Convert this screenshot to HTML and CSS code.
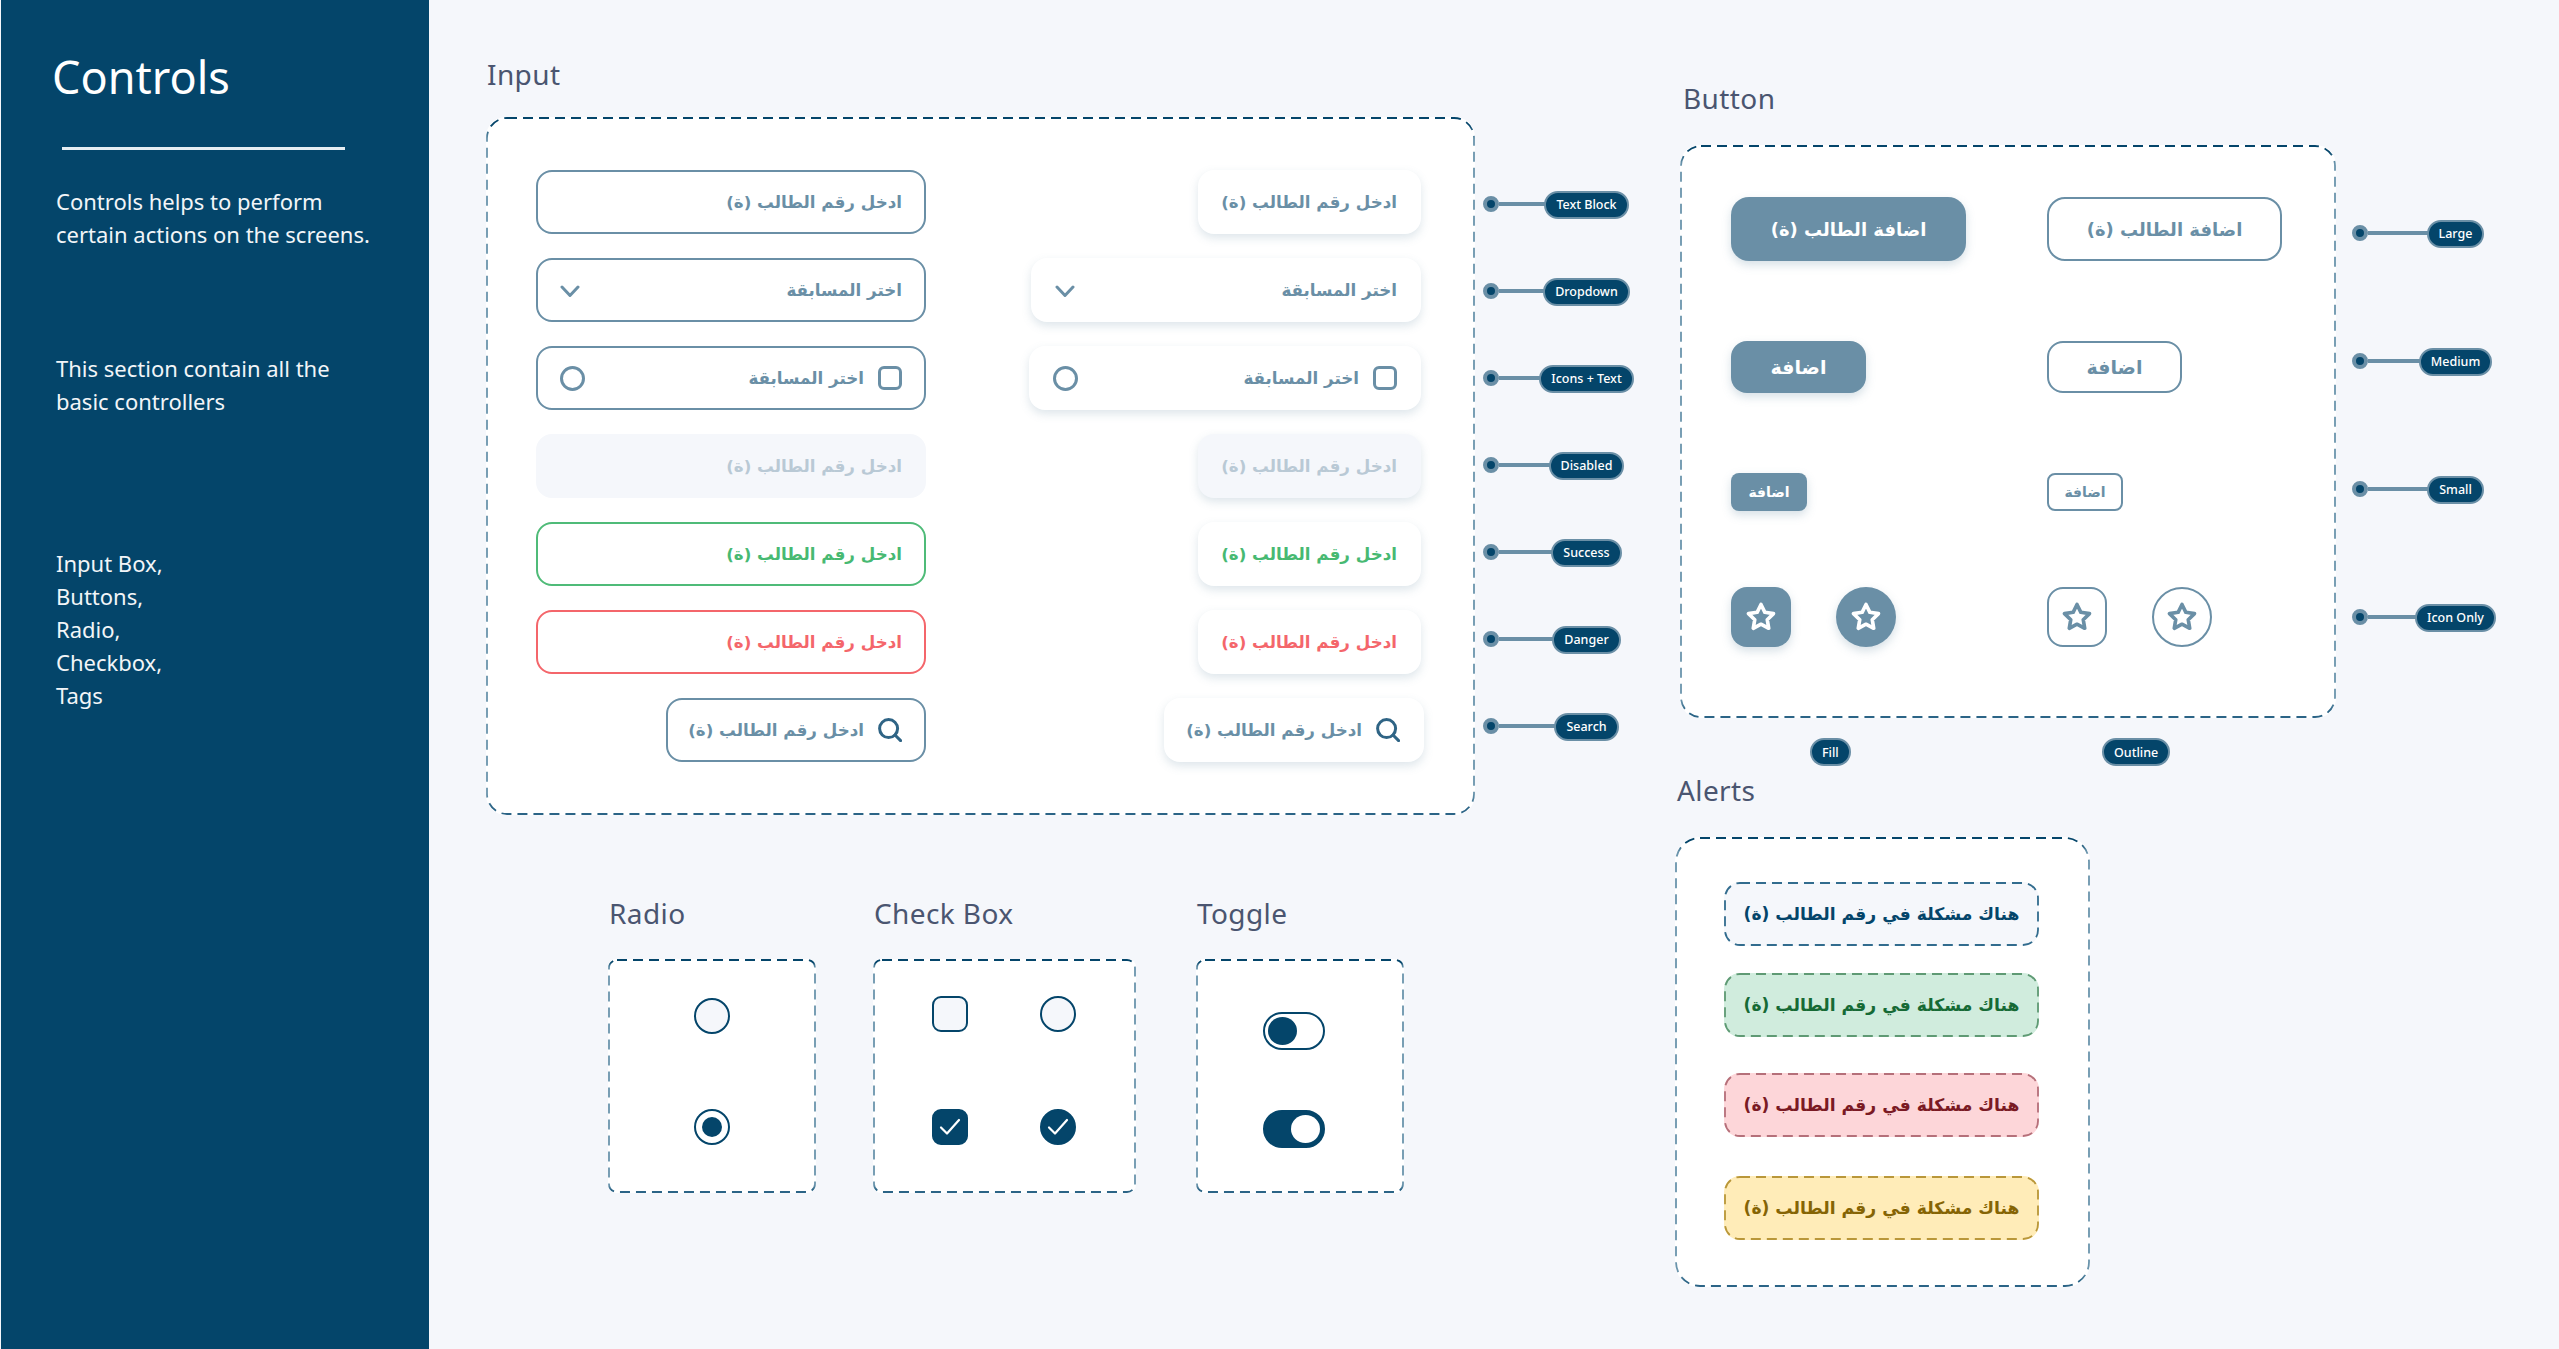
FILE: index.html
```html
<!DOCTYPE html>
<html lang="en">
<head>
<meta charset="UTF-8">
<meta name="viewport" content="width=device-width, initial-scale=1.0">
<title>Controls</title>
<link rel="stylesheet" href="styles.css">
</head>
<body>

<!-- shared svg bits -->
<svg class="defs" aria-hidden="true">
  <defs>
    <linearGradient id="edge" x1="0" y1="0" x2="0" y2="1">
      <stop offset="0" stop-color="#04456a"/>
      <stop offset="0.01" stop-color="#04456a"/>
      <stop offset="0.03" stop-color="#6a94ac"/>
      <stop offset="0.97" stop-color="#6a94ac"/>
      <stop offset="0.99" stop-color="#2b6486"/>
      <stop offset="1" stop-color="#2b6486"/>
    </linearGradient>
    <symbol id="star" viewBox="0 0 24 24">
      <polygon points="12 2 15.09 8.26 22 9.27 17 14.14 18.18 21.02 12 17.77 5.82 21.02 7 14.14 2 9.27 8.91 8.26" fill="none" stroke="currentColor" stroke-width="2.9" stroke-linejoin="round"/>
    </symbol>
    <symbol id="chevron" viewBox="0 0 20 13">
      <polyline points="2 2 10 10.5 18 2" fill="none" stroke="currentColor" stroke-width="3" stroke-linecap="round" stroke-linejoin="round"/>
    </symbol>
    <symbol id="search" viewBox="0 0 24 24">
      <circle cx="10.6" cy="10.6" r="9" fill="none" stroke="currentColor" stroke-width="3"/>
      <line x1="17" y1="17" x2="22.6" y2="22.6" stroke="currentColor" stroke-width="3" stroke-linecap="round"/>
    </symbol>
    <symbol id="check" viewBox="0 0 22 18">
      <polyline points="2 9.5 8 15.5 20 2" fill="none" stroke="currentColor" stroke-width="2.2" stroke-linecap="round" stroke-linejoin="round"/>
    </symbol>
  </defs>
</svg>

<div class="page">

  <aside class="sidebar">
    <h1 class="side-title">Controls</h1>
    <div class="side-rule"></div>
    <p class="side-note">Controls helps to perform<br>certain actions on the screens.</p>
    <p class="side-note">This section contain all the<br>basic controllers</p>
    <p class="side-note side-list">Input Box,<br>Buttons,<br>Radio,<br>Checkbox,<br>Tags</p>
  </aside>

  <main class="board">

    <div class="col-left">
      <section class="input-section">
        <h2 class="section-title">Input</h2>
        <div class="input-row">
          <div class="panel input-panel">
            <svg class="frame"><rect stroke="url(#edge)"/></svg>
            <div class="input-grid">
              <div class="field" dir="rtl"><span>ادخل رقم الطالب (ة)</span></div>
              <div class="field field-card field-sm" dir="rtl"><span>ادخل رقم الطالب (ة)</span></div>

              <div class="field field-split" dir="rtl"><span>اختر المسابقة</span><svg class="ico-chevron"><use href="#chevron"/></svg></div>
              <div class="field field-card field-split" dir="rtl"><span>اختر المسابقة</span><svg class="ico-chevron"><use href="#chevron"/></svg></div>

              <div class="field" dir="rtl"><i class="ico-square"></i><span>اختر المسابقة</span><i class="ico-circle"></i></div>
              <div class="field field-card field-xl" dir="rtl"><i class="ico-square"></i><span>اختر المسابقة</span><i class="ico-circle"></i></div>

              <div class="field is-disabled" dir="rtl"><span>ادخل رقم الطالب (ة)</span></div>
              <div class="field field-card field-sm is-disabled" dir="rtl"><span>ادخل رقم الطالب (ة)</span></div>

              <div class="field is-success" dir="rtl"><span>ادخل رقم الطالب (ة)</span></div>
              <div class="field field-card field-sm is-success" dir="rtl"><span>ادخل رقم الطالب (ة)</span></div>

              <div class="field is-danger" dir="rtl"><span>ادخل رقم الطالب (ة)</span></div>
              <div class="field field-card field-sm is-danger" dir="rtl"><span>ادخل رقم الطالب (ة)</span></div>

              <div class="field field-search" dir="rtl"><svg class="ico-search"><use href="#search"/></svg><span>ادخل رقم الطالب (ة)</span></div>
              <div class="field field-card field-search field-nudge" dir="rtl"><svg class="ico-search"><use href="#search"/></svg><span>ادخل رقم الطالب (ة)</span></div>
            </div>
          </div>

          <div class="callouts callouts-input">
            <div class="callout"><i class="callout-dot"></i><div class="callout-label"><span class="tag">Text Block</span></div></div>
            <div class="callout"><i class="callout-dot"></i><div class="callout-label"><span class="tag">Dropdown</span></div></div>
            <div class="callout"><i class="callout-dot"></i><div class="callout-label"><span class="tag">Icons + Text</span></div></div>
            <div class="callout"><i class="callout-dot"></i><div class="callout-label"><span class="tag">Disabled</span></div></div>
            <div class="callout"><i class="callout-dot"></i><div class="callout-label"><span class="tag">Success</span></div></div>
            <div class="callout"><i class="callout-dot"></i><div class="callout-label"><span class="tag">Danger</span></div></div>
            <div class="callout"><i class="callout-dot"></i><div class="callout-label"><span class="tag">Search</span></div></div>
          </div>
        </div>
      </section>

      <div class="small-groups">
        <section>
          <h2 class="section-title small-title">Radio</h2>
          <div class="panel panel-sm panel-radio">
            <svg class="frame frame-sm"><rect stroke="url(#edge)"/></svg>
            <i class="radio"></i>
            <i class="radio radio-on"></i>
          </div>
        </section>
        <section>
          <h2 class="section-title small-title">Check Box</h2>
          <div class="panel panel-sm panel-check">
            <svg class="frame frame-sm"><rect stroke="url(#edge)"/></svg>
            <i class="box"></i>
            <i class="box box-round"></i>
            <i class="box box-on"><svg class="ico-check"><use href="#check"/></svg></i>
            <i class="box box-round box-on"><svg class="ico-check"><use href="#check"/></svg></i>
          </div>
        </section>
        <section>
          <h2 class="section-title small-title">Toggle</h2>
          <div class="panel panel-sm panel-toggle">
            <svg class="frame frame-sm"><rect stroke="url(#edge)"/></svg>
            <div class="toggle"><i class="knob"></i></div>
            <div class="toggle toggle-on"><i class="knob"></i></div>
          </div>
        </section>
      </div>
    </div>

    <div class="col-right">
      <section class="button-section">
        <h2 class="section-title button-title">Button</h2>
        <div class="input-row">
          <div class="panel button-panel">
            <svg class="frame"><rect stroke="url(#edge)"/></svg>
            <div class="button-grid">
              <div><button class="btn btn-lg" dir="rtl">اضافة الطالب (ة)</button></div>
              <div><button class="btn btn-lg btn-line" dir="rtl">اضافة الطالب (ة)</button></div>
              <div><button class="btn btn-md" dir="rtl">اضافة</button></div>
              <div><button class="btn btn-md btn-line" dir="rtl">اضافة</button></div>
              <div><button class="btn btn-sm" dir="rtl">اضافة</button></div>
              <div><button class="btn btn-sm btn-line" dir="rtl">اضافة</button></div>
              <div class="icon-btns">
                <button class="btn btn-icon"><svg class="ico-star"><use href="#star"/></svg></button>
                <button class="btn btn-icon btn-round"><svg class="ico-star"><use href="#star"/></svg></button>
              </div>
              <div class="icon-btns">
                <button class="btn btn-icon btn-line"><svg class="ico-star"><use href="#star"/></svg></button>
                <button class="btn btn-icon btn-round btn-line"><svg class="ico-star"><use href="#star"/></svg></button>
              </div>
            </div>
          </div>
          <div class="callouts callouts-button">
            <div class="callout"><i class="callout-dot"></i><div class="callout-label"><span class="tag">Large</span></div></div>
            <div class="callout"><i class="callout-dot"></i><div class="callout-label"><span class="tag">Medium</span></div></div>
            <div class="callout"><i class="callout-dot"></i><div class="callout-label"><span class="tag">Small</span></div></div>
            <div class="callout"><i class="callout-dot"></i><div class="callout-label"><span class="tag">Icon Only</span></div></div>
          </div>
        </div>
        <div class="button-tags">
          <span class="tag">Fill</span>
          <span class="tag">Outline</span>
        </div>
      </section>

      <section class="alert-section">
        <h2 class="section-title alert-title">Alerts</h2>
        <div class="panel alert-panel">
          <svg class="frame frame-lg"><rect stroke="url(#edge)"/></svg>
          <div class="alert alert-info" dir="rtl"><svg class="frame frame-alert"><rect/></svg>هناك مشكلة في رقم الطالب (ة)</div>
          <div class="alert alert-ok" dir="rtl"><svg class="frame frame-alert"><rect/></svg>هناك مشكلة في رقم الطالب (ة)</div>
          <div class="alert alert-bad" dir="rtl"><svg class="frame frame-alert"><rect/></svg>هناك مشكلة في رقم الطالب (ة)</div>
          <div class="alert alert-warn" dir="rtl"><svg class="frame frame-alert"><rect/></svg>هناك مشكلة في رقم الطالب (ة)</div>
        </div>
      </section>
    </div>

  </main>
</div>
</body>
</html>
```

FILE: styles.css
```css
* {
  box-sizing: border-box;
}

body {
  margin: 0;
  background-color: #f5f7fb;
  font-family: "Noto Sans", "DejaVu Sans", sans-serif;
  color: #4a5570;
}

i {
  display: block;
}

.defs {
  position: absolute;
  width: 0;
  height: 0;
}

.page {
  display: flex;
  height: 1349px;
  overflow: hidden;
}

/* sidebar */
.sidebar {
  width: 428px;
  margin-left: 1px;
  padding: 47px 0 0 55px;
  background-color: #04456a;
  color: #f2f5f8;
  flex-shrink: 0;
}

.side-title {
  margin: 0 0 40px -4px;
  font-size: 45px;
  font-weight: 400;
  line-height: 60px;
  color: #fff;
}

.side-rule {
  width: 283px;
  height: 3px;
  margin-left: 6px;
  margin-bottom: 35px;
  background-color: #e6edf2;
}

.side-note {
  margin: 0 0 101px;
  font-size: 22px;
  line-height: 33px;
  white-space: nowrap;
}

.side-list {
  margin-top: 129px;
  margin-bottom: 0;
}

/* board */
.board {
  display: grid;
  grid-template-columns: 1189px 1fr;
  padding-left: 57px;
  flex: 1;
}

.col-left {
  padding-top: 55px;
}

.col-right {
  padding-top: 79px;
}

.section-title {
  margin: 0 0 24px 1px;
  font-size: 28px;
  font-weight: 400;
  line-height: 38px;
  letter-spacing: 0.4px;
  color: #4a5570;
}

.small-title {
  margin-bottom: 27px;
}

.button-title,
.alert-title {
  margin-bottom: 28px;
}

.button-title {
  margin-left: 3px;
}

.alert-title {
  margin-left: 2px;
}

/* dashed panels */
.panel {
  position: relative;
  background-color: #fff;
  border-radius: 20px;
}

.frame {
  position: absolute;
  left: 0;
  top: 0;
  width: 100%;
  height: 100%;
  pointer-events: none;
}

.frame rect {
  x: 1px;
  y: 1px;
  width: calc(100% - 2px);
  height: calc(100% - 2px);
  rx: 20px;
  fill: none;
  stroke-width: 1.8;
  stroke-dasharray: 10 6;
}

.frame-sm rect {
  rx: 8px;
}

.frame-lg rect {
  rx: 24px;
}

.frame-alert rect {
  rx: 15px;
}

.input-row {
  display: flex;
  align-items: flex-start;
}

.input-panel {
  width: 989px;
  height: 698px;
  padding: 53px 54px 0 50px;
}

.input-grid {
  display: grid;
  grid-template-columns: 390px 1fr;
  grid-auto-rows: 64px;
  row-gap: 24px;
  justify-items: end;
}

/* input fields */
.field {
  display: flex;
  align-items: center;
  gap: 14px;
  width: 390px;
  height: 64px;
  padding: 0 22px;
  border: 2px solid #6a8fa6;
  border-radius: 16px;
  background-color: #fff;
  color: #6a8fa6;
  font-family: "DejaVu Sans", sans-serif;
  font-size: 16.7px;
  font-weight: 700;
  white-space: nowrap;
}

.field-split {
  justify-content: space-between;
}

.field-card {
  padding: 0 24px;
  border: 0;
  box-shadow: 0 4px 10px rgba(106, 143, 166, 0.22);
}

.field-sm {
  width: 223px;
}

.field-xl {
  width: 392px;
}

.field-search {
  width: 260px;
}

.field-nudge {
  margin-right: -3px;
}

.is-disabled {
  border-color: #f5f7fb;
  background-color: #f5f7fb;
  color: #b9c9d5;
}

.is-success {
  border-color: #4fbb78;
  color: #47b972;
}

.is-danger {
  border-color: #f4666b;
  color: #f4666b;
}

.ico-chevron {
  width: 20px;
  height: 13px;
  margin-top: 2px;
  flex-shrink: 0;
}

.ico-square {
  width: 24px;
  height: 24px;
  border: 3px solid #6a8fa6;
  border-radius: 6px;
  flex-shrink: 0;
}

.ico-circle {
  width: 25px;
  height: 25px;
  margin-right: auto;
  border: 3px solid #6a8fa6;
  border-radius: 50%;
  flex-shrink: 0;
}

.ico-search {
  width: 24px;
  height: 24px;
  color: #2f6485;
  flex-shrink: 0;
}

/* tags with lines */
.callouts {
  display: flex;
  flex-direction: column;
}

.callouts-input {
  margin-left: 8px;
  padding-top: 73px;
  row-gap: 59px;
}

.callouts-button {
  margin-left: 16px;
  padding-top: 74px;
  row-gap: 100px;
}

.callout {
  display: flex;
  align-items: center;
  height: 28px;
}

.callout-dot {
  width: 16px;
  height: 16px;
  border: 4px solid #6a8fa6;
  border-radius: 50%;
  background-color: #04456a;
  flex-shrink: 0;
}

.callout-label {
  display: flex;
  justify-content: center;
  width: 175px;
  background: linear-gradient(#6a8fa6, #6a8fa6) left center / 50% 4px no-repeat;
}

.callout-label .tag {
  margin-top: 1px;
}

.tag {
  display: inline-flex;
  align-items: center;
  height: 28px;
  padding: 0 10px;
  border: 2px solid #6a8fa6;
  border-radius: 14px;
  background-color: #04456a;
  color: #fff;
  font-size: 12.5px;
  font-weight: 500;
  white-space: nowrap;
}

/* small groups under the input panel */
.small-groups {
  display: grid;
  grid-template-columns: 265px 323px 208px;
  margin: 79px 0 0 122px;
}

.panel-sm {
  width: 208px;
  height: 234px;
  border-radius: 8px;
}

.panel-radio {
  display: flex;
  flex-direction: column;
  align-items: center;
  row-gap: 75px;
  padding-top: 39px;
}

.radio {
  width: 36px;
  height: 36px;
  border: 2px solid #04456a;
  border-radius: 50%;
  background-color: #f5f7fb;
}

.radio-on {
  display: flex;
  align-items: center;
  justify-content: center;
  background-color: #fff;
}

.radio-on::after {
  content: "";
  width: 20px;
  height: 20px;
  border-radius: 50%;
  background-color: #04456a;
}

.panel-check {
  display: grid;
  grid-template-columns: 36px 36px;
  grid-template-rows: 36px 36px;
  column-gap: 72px;
  row-gap: 77px;
  width: 263px;
  padding: 37px 0 0 59px;
}

.box {
  display: flex;
  align-items: center;
  justify-content: center;
  border: 2px solid #04456a;
  border-radius: 9px;
  background-color: #f5f7fb;
}

.box-round {
  border-radius: 50%;
}

.box-on {
  background-color: #04456a;
  color: #fff;
}

.ico-check {
  width: 22px;
  height: 18px;
}

.panel-toggle {
  display: flex;
  flex-direction: column;
  row-gap: 60px;
  padding: 53px 0 0 67px;
}

.toggle {
  display: flex;
  align-items: center;
  width: 62px;
  height: 38px;
  padding: 0 3px;
  border: 2px solid #04456a;
  border-radius: 19px;
  background-color: #fff;
}

.knob {
  width: 29px;
  height: 28px;
  border-radius: 50%;
  background-color: #04456a;
}

.toggle-on {
  justify-content: flex-end;
  background-color: #04456a;
}

.toggle-on .knob {
  background-color: #fff;
}

/* buttons */
.button-section {
  margin-left: 5px;
}

.button-panel {
  width: 656px;
  height: 573px;
  padding: 52px 0 0 51px;
}

.button-grid {
  display: grid;
  grid-template-columns: 316px 1fr;
  grid-template-rows: 144px 132px 114px 60px;
}

.btn {
  display: flex;
  align-items: center;
  justify-content: center;
  padding: 0;
  border: 0;
  background-color: #6a8fa6;
  color: #fff;
  font-family: "DejaVu Sans", sans-serif;
  font-weight: 700;
  box-shadow: 0 4px 10px rgba(106, 143, 166, 0.28);
}

.btn-lg {
  width: 235px;
  height: 64px;
  border-radius: 18px;
  font-size: 18px;
}

.btn-md {
  width: 135px;
  height: 52px;
  border-radius: 16px;
  font-size: 19px;
}

.btn-sm {
  width: 76px;
  height: 38px;
  border-radius: 8px;
  font-size: 14px;
}

.btn-icon {
  width: 60px;
  height: 60px;
  border-radius: 16px;
}

.btn-round {
  border-radius: 50%;
}

.btn-line {
  border: 2px solid #6a8fa6;
  background-color: #fff;
  color: #6a8fa6;
  box-shadow: none;
}

.icon-btns {
  display: flex;
  column-gap: 45px;
}

.ico-star {
  width: 30px;
  height: 30px;
}

.button-tags {
  display: grid;
  grid-template-columns: 292px auto;
  justify-content: start;
  margin: 20px 0 0 130px;
}

.button-tags .tag {
  justify-self: start;
}

/* alerts */
.alert-section {
  margin-top: 5px;
}

.alert-panel {
  display: grid;
  grid-template-rows: 91px 100px 103px 65px;
  width: 415px;
  height: 450px;
  padding: 45px 0 0 49px;
  border-radius: 24px;
}

.alert {
  position: relative;
  display: flex;
  align-items: center;
  justify-content: center;
  width: 315px;
  height: 64px;
  border-radius: 16px;
  font-family: "DejaVu Sans", sans-serif;
  font-size: 17.2px;
  font-weight: 700;
  white-space: nowrap;
}

.alert-info {
  background-color: #f5f7fb;
  color: #04456a;
}

.alert-info rect {
  stroke: #326c8e;
}

.alert-ok {
  background-color: #d0ecdd;
  color: #166a35;
}

.alert-ok rect {
  stroke: #5f9a74;
}

.alert-bad {
  background-color: #fdd6d9;
  color: #7a1a24;
}

.alert-bad rect {
  stroke: #b5707a;
}

.alert-warn {
  background-color: #ffecb8;
  color: #856404;
}

.alert-warn rect {
  stroke: #b9973a;
}
```
